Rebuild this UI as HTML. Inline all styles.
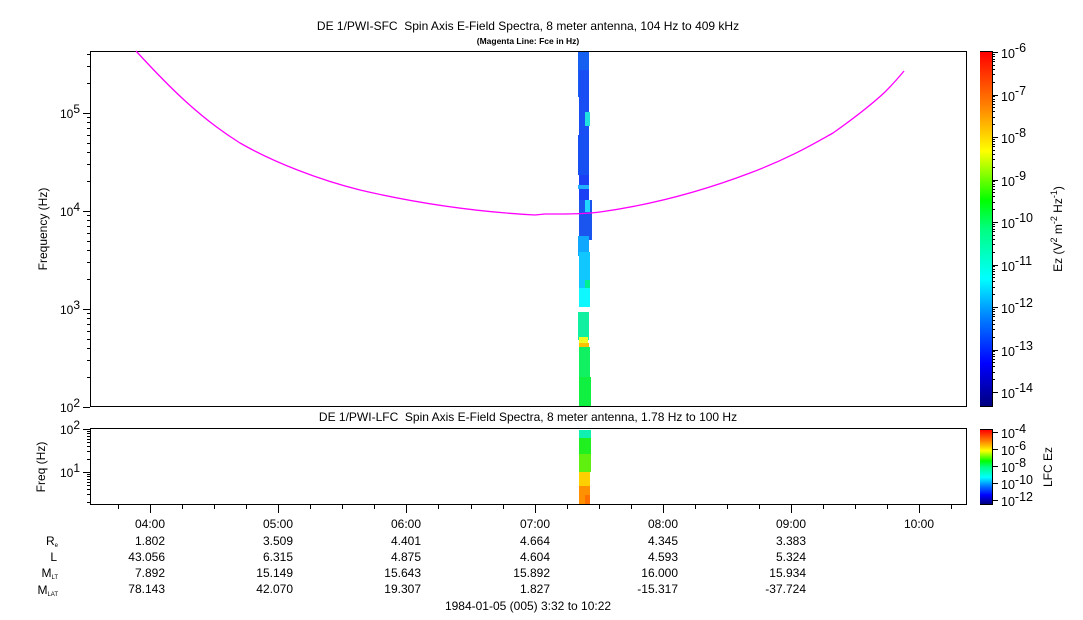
<!DOCTYPE html>
<html><head><meta charset="utf-8"><style>
html,body{margin:0;padding:0;background:#fff;}
svg{display:block;font-family:"Liberation Sans",sans-serif;}
text{white-space:pre;}
</style></head><body>
<svg id="s" width="1083" height="620" viewBox="0 0 1083 620" xmlns="http://www.w3.org/2000/svg" xml:space="preserve">
<defs>
<linearGradient id="cb" x1="0" y1="1" x2="0" y2="0">
<stop offset="0" stop-color="#00007f"/>
<stop offset="0.12" stop-color="#0000ff"/>
<stop offset="0.25" stop-color="#0080ff"/>
<stop offset="0.36" stop-color="#00ffff"/>
<stop offset="0.5" stop-color="#00ff80"/>
<stop offset="0.58" stop-color="#00ff00"/>
<stop offset="0.72" stop-color="#ffff00"/>
<stop offset="0.85" stop-color="#ff8000"/>
<stop offset="1" stop-color="#ff0000"/>
</linearGradient>
</defs>
<g id="g" stroke="#000" stroke-width="1" fill="none" shape-rendering="crispEdges"></g>
<g shape-rendering="crispEdges">
<rect x="578" y="52" width="11" height="45" fill="#1560f0"/>
<rect x="579" y="70" width="10" height="70" fill="#1a4ef5"/>
<rect x="585" y="112" width="5" height="14" fill="#20e0e0"/>
<rect x="578" y="135" width="11" height="40" fill="#1650f2"/>
<rect x="579" y="175" width="10" height="30" fill="#1a3ff5"/>
<rect x="578" y="185" width="11" height="4" fill="#20b0ff"/>
<rect x="579" y="200" width="13" height="40" fill="#1a55f0"/>
<rect x="585" y="200" width="5" height="12" fill="#20d8ff"/>
<rect x="578" y="236" width="11" height="20" fill="#10a8ff"/>
<rect x="579" y="252" width="11" height="45" fill="#10c8ff"/>
<rect x="585" y="280" width="5" height="10" fill="#00f090"/>
<rect x="579" y="288" width="11" height="19" fill="#10f8ff"/>
<rect x="578" y="312" width="11" height="28" fill="#10f0a0"/>
<rect x="579" y="337" width="9" height="6" fill="#f0ff20"/>
<rect x="579" y="343" width="10" height="4" fill="#ffc000"/>
<rect x="579" y="347" width="11" height="30" fill="#10f060"/>
<rect x="579" y="377" width="12" height="29" fill="#10f040"/>
<rect x="579" y="430" width="12" height="8" fill="#10f0b0"/>
<rect x="579" y="438" width="12" height="16" fill="#20f020"/>
<rect x="579" y="454" width="12" height="18" fill="#60f010"/>
<rect x="579" y="472" width="11" height="14" fill="#ffd000"/>
<rect x="579" y="486" width="11" height="18" fill="#ff9000"/>
<rect x="585" y="495" width="5" height="9" fill="#ff7000"/>
</g>
<path fill="none" stroke="#ff00ff" stroke-width="1.3" d="M136,51 C170,88 200,118 240,143 C275,163 320,180 360,190 C420,204 480,212 535,215 L545,214 C570,214 585,214 600,212 C650,205 700,192 750,173 C790,158 815,143 833,133 C850,121 870,106 885,92 C893,84 899,77 904,71"/>
<rect x="980" y="52" width="12" height="354" fill="url(#cb)"/>
<rect x="980" y="430" width="12" height="74" fill="url(#cb)"/>
<g font-size="12" fill="#000">
<text x="528" y="30" text-anchor="middle">DE 1/PWI-SFC  Spin Axis E-Field Spectra, 8 meter antenna, 104 Hz to 409 kHz</text>
<text x="528" y="44" text-anchor="middle" font-size="8.5" font-weight="bold">(Magenta Line: Fce in Hz)</text>
<text x="528" y="421" text-anchor="middle">DE 1/PWI-LFC  Spin Axis E-Field Spectra, 8 meter antenna, 1.78 Hz to 100 Hz</text>
<text transform="translate(47,229) rotate(-90)" text-anchor="middle">Frequency (Hz)</text>
<text transform="translate(45,467) rotate(-90)" text-anchor="middle">Freq (Hz)</text>
<text x="80" y="118" text-anchor="end">10<tspan dy="-5">5</tspan></text>
<text x="80" y="216" text-anchor="end">10<tspan dy="-5">4</tspan></text>
<text x="80" y="314" text-anchor="end">10<tspan dy="-5">3</tspan></text>
<text x="80" y="412" text-anchor="end">10<tspan dy="-5">2</tspan></text>
<text x="80" y="434" text-anchor="end">10<tspan dy="-5">2</tspan></text>
<text x="80" y="477" text-anchor="end">10<tspan dy="-5">1</tspan></text>
<text transform="translate(1062,229) rotate(-90)" text-anchor="middle">Ez (V<tspan dy="-5" font-size="9">2</tspan><tspan dy="5"> m</tspan><tspan dy="-5" font-size="9">-2</tspan><tspan dy="5"> Hz</tspan><tspan dy="-5" font-size="9">-1</tspan><tspan dy="5">)</tspan></text>
<text transform="translate(1052,467) rotate(-90)" text-anchor="middle">LFC Ez</text>
<g text-anchor="end">
<text x="165" y="528">04:00</text><text x="293" y="528">05:00</text><text x="421" y="528">06:00</text><text x="550" y="528">07:00</text><text x="678" y="528">08:00</text><text x="806" y="528">09:00</text><text x="934" y="528">10:00</text>
<text x="58" y="545">R<tspan font-size="6" dy="2">e</tspan></text>
<text x="57" y="561">L</text>
<text x="58" y="577">M<tspan font-size="6" dy="2">LT</tspan></text>
<text x="58" y="594">M<tspan font-size="6" dy="2">LAT</tspan></text>
<text x="165" y="545">1.802</text><text x="293" y="545">3.509</text><text x="421" y="545">4.401</text><text x="550" y="545">4.664</text><text x="678" y="545">4.345</text><text x="806" y="545">3.383</text>
<text x="165" y="561">43.056</text><text x="293" y="561">6.315</text><text x="421" y="561">4.875</text><text x="550" y="561">4.604</text><text x="678" y="561">4.593</text><text x="806" y="561">5.324</text>
<text x="165" y="577">7.892</text><text x="293" y="577">15.149</text><text x="421" y="577">15.643</text><text x="550" y="577">15.892</text><text x="678" y="577">16.000</text><text x="806" y="577">15.934</text>
<text x="165" y="593">78.143</text><text x="293" y="593">42.070</text><text x="421" y="593">19.307</text><text x="550" y="593">1.827</text><text x="678" y="593">-15.317</text><text x="806" y="593">-37.724</text>
</g>
<text x="528" y="610" text-anchor="middle">1984-01-05 (005) 3:32 to 10:22</text>
<g font-size="12.5">
<text x="1001" y="58">10<tspan dy="-6">-6</tspan></text>
<text x="1001" y="101">10<tspan dy="-6">-7</tspan></text>
<text x="1001" y="143">10<tspan dy="-6">-8</tspan></text>
<text x="1001" y="186">10<tspan dy="-6">-9</tspan></text>
<text x="1001" y="228">10<tspan dy="-6">-10</tspan></text>
<text x="1001" y="271">10<tspan dy="-6">-11</tspan></text>
<text x="1001" y="313">10<tspan dy="-6">-12</tspan></text>
<text x="1001" y="356">10<tspan dy="-6">-13</tspan></text>
<text x="1001" y="398">10<tspan dy="-6">-14</tspan></text>
<text x="1001" y="438">10<tspan dy="-5">-4</tspan></text>
<text x="1001" y="455">10<tspan dy="-5">-6</tspan></text>
<text x="1001" y="472">10<tspan dy="-5">-8</tspan></text>
<text x="1001" y="489">10<tspan dy="-5">-10</tspan></text>
<text x="1001" y="506">10<tspan dy="-5">-12</tspan></text>
</g>
</g>
</svg>
<script>
var g=document.getElementById('g'),d='';
function L(a,b,c,e){d+='M'+a+' '+b+'L'+c+' '+e;}
d+='M90.5 51.5H966.5V406.5H90.5Z M90.5 428.5H966.5V504.5H90.5Z M980.5 51.5H992.5V406.5H980.5Z M980.5 429.5H992.5V504.5H980.5Z';
for(var e=2;e<=5;e++){for(var m=1;m<=9;m++){var y=407-(e-2+Math.log10(m))*98;if(y<52)continue;y=Math.round(y)+.5;L(90,y,m==1?83:87,y);}}
for(var e=0;e<=2;e++){for(var m=1;m<=9;m++){var y=472-(e-1+Math.log10(m))*43;if(y<429||y>504)continue;y=Math.round(y)+.5;L(90,y,m==1?83:87,y);if(e==2)break;}}
for(var k=-1;k<26;k++){var x=150+k*32.05;if(x<92||x>964)continue;x=Math.round(x)+.5;L(x,505,x,k%4==0?513:509);}
for(var e=0;e<9;e++){for(var m=1;m<=9;m++){var y=52+e*42.5-Math.log10(m)*42.5;if(y<52||y>406)continue;y=Math.round(y)+.5;L(992,y,m==1?998:995,y);}}
for(var e=0;e<5;e++){var y=Math.round(432+e*17)+.5;L(992,y,998,y);}
var p=document.createElementNS('http://www.w3.org/2000/svg','path');p.setAttribute('d',d);g.appendChild(p);
</script>
</body></html>
